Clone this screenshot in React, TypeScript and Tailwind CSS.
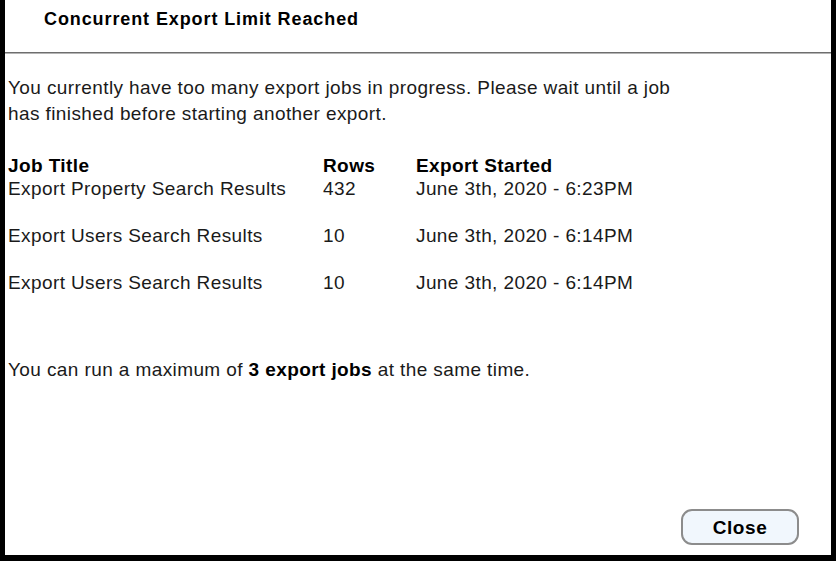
import React from "react"

const jobs = [
  { title: "Export Property Search Results", rows: "432", started: "June 3th, 2020 - 6:23PM" },
  { title: "Export Users Search Results", rows: "10", started: "June 3th, 2020 - 6:14PM" },
  { title: "Export Users Search Results", rows: "10", started: "June 3th, 2020 - 6:14PM" },
]

export default function App() {
  return (
    <div className="w-[836px] h-[561px] bg-black flex" style={{ fontFamily: '"Liberation Sans", Arial, sans-serif' }}>
      <div className="ml-[5px] mr-[5px] mb-[6px] flex-1 bg-white flex flex-col text-[#1a1a1a]">
        <div className="h-[52px] pl-[39px] pt-[9px]">
          <h1 className="text-[18px] tracking-[0.9px] font-bold leading-[20px] text-black">Concurrent Export Limit Reached</h1>
        </div>
        <div className="h-px bg-[#6e6e6e]" />
        <div className="h-px bg-[#b4b4b4]" />

        <div className="flex-1 flex flex-col pl-[3px] pt-[21px] pr-[30px] pb-[10px] text-[19px] leading-[23px] tracking-[0.4px]">
          <p className="leading-[26px]">
            You currently have too many export jobs in progress. Please wait until a job
            <br />
            has finished before starting another export.
          </p>

          <div className="mt-[27px]">
            <div className="flex font-bold text-black">
              <div className="w-[315px]">Job Title</div>
              <div className="w-[93px]">Rows</div>
              <div>Export Started</div>
            </div>
            <div className="flex flex-col gap-[24px]">
              {jobs.map((job, i) => (
                <div key={i} className="flex">
                  <div className="w-[315px]">{job.title}</div>
                  <div className="w-[93px]">{job.rows}</div>
                  <div>{job.started}</div>
                </div>
              ))}
            </div>
          </div>

          <p className="mt-[64px]">
            You can run a maximum of <span className="font-bold text-black">3 export jobs</span> at the same time.
          </p>

          <div className="mt-auto flex justify-end pr-[2px]">
            <button className="w-[118px] h-[36px] rounded-[11px] border-2 border-[#8c8c8c] bg-[#f1f7fd] text-[19px] tracking-[0.6px] font-bold text-black">
              Close
            </button>
          </div>
        </div>
      </div>
    </div>
  )
}
